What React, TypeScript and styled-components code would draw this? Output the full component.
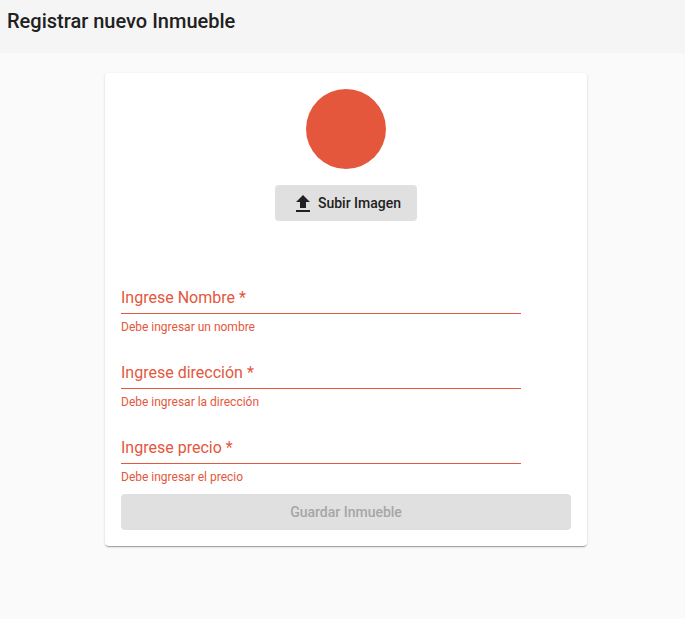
import React, { useState } from "react";
import styled, { createGlobalStyle } from "styled-components";

const accent = "#e4573d";
const ink = "#212121";

const GlobalStyle = createGlobalStyle`
  *, *::before, *::after { box-sizing: border-box; }
  body {
    margin: 0;
    min-height: 100vh;
    background: #fafafa;
    color: ${ink};
    font-family: Roboto, "Liberation Sans", sans-serif;
  }
`;

const Header = styled.header`
  background: #f5f5f5;
  padding: 5px 7px 16px;
`;

const Title = styled.h1`
  margin: 0;
  font-size: 20px;
  font-weight: 500;
  line-height: 32px;
`;

const Main = styled.main`
  padding: 20px 0 20px 7px;
`;

const Card = styled.form`
  max-width: 482px;
  margin: 0 auto;
  padding: 16px;
  border-radius: 4px;
  background: #fff;
  box-shadow: 0 2px 1px -1px rgba(0, 0, 0, 0.2), 0 1px 1px rgba(0, 0, 0, 0.14),
    0 1px 3px rgba(0, 0, 0, 0.12);
`;

const ImagePicker = styled.section`
  display: flex;
  flex-direction: column;
  align-items: center;
  gap: 16px;
  margin-bottom: 62px;
`;

const Avatar = styled.div`
  width: 80px;
  height: 80px;
  border-radius: 50%;
  background: ${accent};
`;

const Button = styled.button<{ $full?: boolean }>`
  display: flex;
  align-items: center;
  justify-content: center;
  gap: 3px;
  width: ${({ $full }) => ($full ? "100%" : "auto")};
  height: 36px;
  padding: 0 16px;
  border: 0;
  border-radius: 4px;
  background: #e0e0e0;
  color: ${ink};
  font: 500 14px/36px Roboto, "Liberation Sans", sans-serif;
  cursor: pointer;

  &:disabled {
    color: #a6a6a6;
    cursor: default;
  }
`;

const Fields = styled.div`
  display: flex;
  flex-direction: column;
  gap: 23px;
  max-width: 400px;
  margin-bottom: 9px;
`;

const Control = styled.div`
  display: grid;
  align-items: center;
  height: 31px;
  border-bottom: 1px solid ${accent};

  > * {
    grid-area: 1 / 1;
  }
`;

const Label = styled.label<{ $hidden: boolean }>`
  color: ${accent};
  font-size: 16px;
  line-height: 30px;
  pointer-events: none;
  visibility: ${({ $hidden }) => ($hidden ? "hidden" : "visible")};
`;

const Input = styled.input`
  width: 100%;
  height: 30px;
  padding: 0;
  border: 0;
  outline: 0;
  background: transparent;
  color: ${ink};
  font: 400 16px/30px Roboto, "Liberation Sans", sans-serif;
`;

const ErrorText = styled.p`
  margin: 5px 0 0;
  color: ${accent};
  font-size: 12px;
  line-height: 16px;
`;

const UploadIcon = () => (
  <svg width="24" height="24" viewBox="0 0 24 24" fill="currentColor" aria-hidden="true">
    <path d="M9 17h6v-6h4l-7-7-7 7h4zm-4 2h14v2H5z" />
  </svg>
);

const fields = [
  { id: "nombre", label: "Ingrese Nombre *", error: "Debe ingresar un nombre" },
  { id: "direccion", label: "Ingrese dirección *", error: "Debe ingresar la dirección" },
  { id: "precio", label: "Ingrese precio *", error: "Debe ingresar el precio" },
];

function TextField({ id, label, error }: { id: string; label: string; error: string }) {
  const [value, setValue] = useState("");
  return (
    <div>
      <Control>
        <Label htmlFor={id} $hidden={value !== ""}>{label}</Label>
        <Input
          id={id}
          name={id}
          value={value}
          required
          aria-describedby={`${id}-error`}
          onChange={(e) => setValue(e.target.value)}
        />
      </Control>
      <ErrorText id={`${id}-error`}>{error}</ErrorText>
    </div>
  );
}

export default function App() {
  return (
    <>
      <GlobalStyle />
      <Header>
        <Title>Registrar nuevo Inmueble</Title>
      </Header>
      <Main>
        <Card>
          <ImagePicker>
            <Avatar />
            <Button type="button">
              <UploadIcon />
              Subir Imagen
            </Button>
          </ImagePicker>
          <Fields>
            {fields.map((field) => (
              <TextField key={field.id} {...field} />
            ))}
          </Fields>
          <Button type="submit" $full disabled>
            Guardar Inmueble
          </Button>
        </Card>
      </Main>
    </>
  );
}
